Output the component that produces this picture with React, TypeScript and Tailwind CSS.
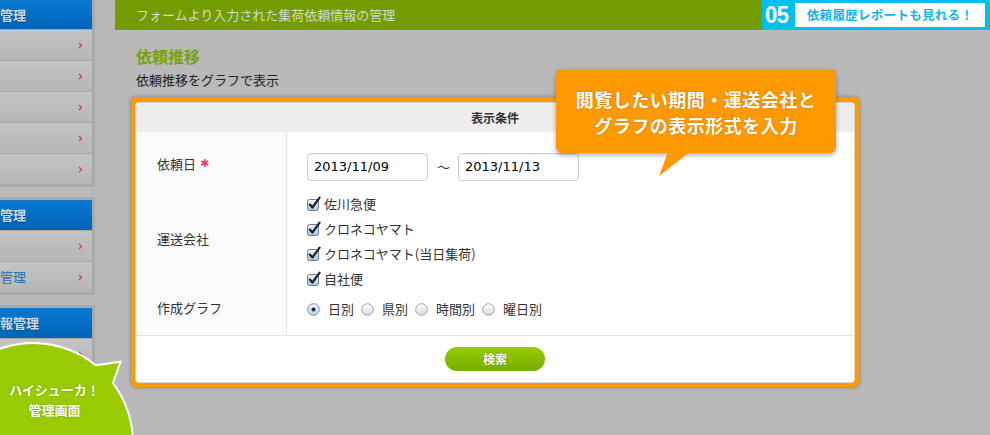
import React from "react";

function Chevron() {
  return (
    <svg width="5" height="7" viewBox="0 0 5 7">
      <path d="M1 1l2.5 2.5L1 6" fill="none" stroke="#c9453a" strokeWidth="1.2" />
    </svg>
  );
}

function SideItem({ text }: { text?: string }) {
  return (
    <div className="box-content h-[30px] border-t border-[#a6a6a6] first:border-t-0 bg-gradient-to-b from-[#c4c4c4] to-[#b6b6b6] flex items-center justify-between pr-[9px]">
      <span className="whitespace-nowrap text-[13px] text-[#1f6fba]">{text}</span>
      <Chevron />
    </div>
  );
}

function SidePanel({
  title,
  items,
  first,
}: {
  title: string;
  items: (string | undefined)[];
  first?: boolean;
}) {
  return (
    <div
      className={
        first
          ? "w-[95px] border-r-[3px] border-b-[3px] border-[#a9a9a9]"
          : "w-[95px] mt-[10px] border-t-[3px] border-r-[3px] border-b-[3px] border-[#a9a9a9]"
      }
    >
      <div
        className={
          (first ? "h-[29px] " : "h-[30px] ") +
          "bg-gradient-to-b from-[#0a79cf] to-[#0064b9] flex items-center"
        }
      >
        <span className="whitespace-nowrap text-[13px] font-bold text-[#d3d8de] [text-shadow:0_1px_1px_rgba(0,0,0,0.3)]">
          {title}
        </span>
      </div>
      {items.map((t, i) => (
        <SideItem key={i} text={t} />
      ))}
    </div>
  );
}

function CheckBox() {
  return (
    <svg width="14" height="15" viewBox="0 0 14 15" className="shrink-0">
      <defs>
        <linearGradient id="cbg" x1="0" y1="0" x2="0" y2="1">
          <stop offset="0" stopColor="#f1f6fc" />
          <stop offset="1" stopColor="#a6c2e5" />
        </linearGradient>
      </defs>
      <rect x="0.5" y="3.5" width="11" height="11" rx="2" fill="url(#cbg)" stroke="#6b7d92" />
      <path
        d="M2.8 8.6l2.6 2.9L12.6 1.6"
        fill="none"
        stroke="#1b2029"
        strokeWidth="2.2"
        strokeLinecap="round"
        strokeLinejoin="round"
      />
    </svg>
  );
}

function Radio({ on }: { on?: boolean }) {
  return (
    <svg width="13" height="13" viewBox="0 0 13 13" className="shrink-0">
      <defs>
        <linearGradient id="rg0" x1="0" y1="0" x2="0" y2="1">
          <stop offset="0" stopColor="#ffffff" />
          <stop offset="1" stopColor="#d9d9d9" />
        </linearGradient>
        <linearGradient id="rg1" x1="0" y1="0" x2="0" y2="1">
          <stop offset="0" stopColor="#f3f7fc" />
          <stop offset="1" stopColor="#b9d0ec" />
        </linearGradient>
      </defs>
      <circle cx="6.5" cy="6.5" r="5.8" fill={on ? "url(#rg1)" : "url(#rg0)"} stroke={on ? "#7f8fa3" : "#a2a2a2"} />
      {on && <circle cx="6.5" cy="6.5" r="2" fill="#1d2430" />}
    </svg>
  );
}

function DateInput({ value }: { value: string }) {
  return (
    <div className="w-[121px] h-[28px] rounded-[4px] border border-[#cfcfcf] bg-white shadow-[inset_0_1px_2px_rgba(0,0,0,0.08)] flex items-center pl-[6px] text-[13px] text-black font-['DejaVu_Sans',sans-serif]">
      {value}
    </div>
  );
}

export default function App() {
  return (
    <div className="relative w-[990px] h-[435px] overflow-hidden bg-[#b9b9b9] flex font-['Noto_Sans_CJK_JP',sans-serif]">
      {/* sidebar */}
      <div className="w-[115px] shrink-0 flex flex-col">
        <SidePanel first title="管理" items={[undefined, undefined, undefined, undefined, undefined]} />
        <SidePanel title="管理" items={[undefined, "管理"]} />
        <SidePanel title="報管理" items={[undefined, undefined, undefined]} />
      </div>

      {/* main */}
      <div className="flex-1 relative">
        <div className="flex h-[30px]">
          <div className="flex-1 bg-[#739c00] pl-[21px] flex items-center text-[13px] text-[#d3dac6]">
            フォームより入力された集荷依頼情報の管理
          </div>
          <div className="w-[228px] bg-[#00bfee] flex items-center pl-[3px]">
            <span className="w-[30px] text-[22px] leading-none font-bold text-white font-['Liberation_Sans',sans-serif] tracking-[-0.5px] scale-y-[1.1]">
              05
            </span>
            <div className="w-[190px] h-[24px] bg-white flex items-center justify-center text-[12.5px] font-bold text-[#16b2e7] tracking-[0.3px]">
              依頼履歴レポートも見れる！
            </div>
          </div>
        </div>

        <div className="mt-[16px] ml-[21px] text-[16px] leading-[20px] font-bold text-[#77a20f]">依頼推移</div>
        <div className="mt-[5px] ml-[21px] text-[13px] leading-[18px] text-[#222]">依頼推移をグラフで表示</div>

        {/* card */}
        <div className="mt-[8px] ml-[16px] w-[728px] rounded-[5px] border-[4px] border-t-[5px] border-[#ff9900] bg-[#ff9900] shadow-[0_0_4px_rgba(0,0,0,0.35)]">
          <div className="rounded-[4px] border border-[#d8d8d8] bg-white overflow-hidden">
            <div className="h-[29px] bg-[#eeeeee] flex items-center justify-center text-[12px] font-bold text-[#333]">
              表示条件
            </div>

            <div className="flex h-[59px]">
              <div className="w-[151px] shrink-0 bg-[#fbfbfb] border-r border-[#e3e3e3] pl-[21px] pt-[23px] text-[13px] leading-[18px] text-[#333] flex items-start">
                依頼日
                <span className="ml-[4px] text-[11px] text-[#f53a6a] font-['DejaVu_Sans',sans-serif]">✱</span>
              </div>
              <div className="pl-[20px] pt-[21px] flex items-start">
                <DateInput value="2013/11/09" />
                <span className="ml-[9px] mr-[8px] w-[13px] h-[28px] flex items-center justify-center text-[13px] text-[#333]">～</span>
                <DateInput value="2013/11/13" />
              </div>
            </div>

            <div className="flex h-[100px]">
              <div className="w-[151px] shrink-0 bg-[#fbfbfb] border-r border-[#e3e3e3] pl-[21px] pt-[39px] text-[13px] leading-[18px] text-[#333]">
                運送会社
              </div>
              <div className="pl-[20px] flex flex-col">
                {["佐川急便", "クロネコヤマト", "クロネコヤマト(当日集荷)", "自社便"].map((t) => (
                  <div key={t} className="h-[25px] flex items-center gap-[3px] text-[13px] text-[#333]">
                    <CheckBox />
                    <span>{t}</span>
                  </div>
                ))}
              </div>
            </div>

            <div className="flex h-[44px]">
              <div className="w-[151px] shrink-0 bg-[#fbfbfb] border-r border-[#e3e3e3] pl-[21px] pt-[8px] text-[13px] leading-[18px] text-[#333]">
                作成グラフ
              </div>
              <div className="pl-[20px] pt-[8px] h-[20px] box-content flex items-center text-[13px] text-[#333]">
                <Radio on />
                <span className="ml-[8px] mr-[7px]">日別</span>
                <Radio />
                <span className="ml-[8px] mr-[7px]">県別</span>
                <Radio />
                <span className="ml-[8px] mr-[7px]">時間別</span>
                <Radio />
                <span className="ml-[8px]">曜日別</span>
              </div>
            </div>

            <div className="h-[47px] border-t border-[#e3e3e3] flex items-center justify-center">
              <div className="w-[100px] h-[24px] rounded-full bg-gradient-to-b from-[#98cc00] to-[#73ae00] flex items-center justify-center text-[12px] font-bold text-white [text-shadow:0_0_1px_rgba(0,0,0,0.4)]">
                検索
              </div>
            </div>
          </div>
        </div>

        {/* callout */}
        <div className="absolute left-[441px] top-[69px] w-[280px] h-[84px] rounded-[6px] bg-[#ff9900] shadow-[0_2px_5px_rgba(0,0,0,0.35)] pt-[17px] text-center text-[18px] leading-[26px] font-bold text-white tracking-[0.5px] [text-shadow:0_0_2px_rgba(150,80,0,0.5)]">
          <div>閲覧したい期間・運送会社と</div>
          <div>グラフの表示形式を入力</div>
          <svg className="absolute left-[103px] top-[83px]" width="32" height="25" viewBox="0 0 32 25">
            <path d="M9 0L31 0L0 24Z" fill="#ff9900" />
          </svg>
        </div>
      </div>

      {/* green bubble */}
      <div className="absolute left-0 top-[330px] w-[140px] h-[105px]">
        <svg width="140" height="105" viewBox="0 0 140 105" className="absolute left-0 top-0">
          <circle cx="33" cy="113" r="99" fill="#99cc00" stroke="#ffffff" strokeWidth="4" />
          <path d="M84 38L119 33L108 64Z" fill="#99cc00" stroke="#ffffff" strokeWidth="4" strokeLinejoin="miter" />
          <circle cx="33" cy="113" r="99" fill="#99cc00" />
          <path d="M84 38L119 33L108 64Z" fill="#99cc00" />
        </svg>
        <div className="absolute left-[0px] top-[50px] w-[109px] text-center text-[13px] leading-[20px] font-bold text-white [text-shadow:0_0_2px_rgba(60,90,0,0.5)]">
          <div>ハイシューカ！</div>
          <div>管理画面</div>
        </div>
      </div>
    </div>
  );
}
